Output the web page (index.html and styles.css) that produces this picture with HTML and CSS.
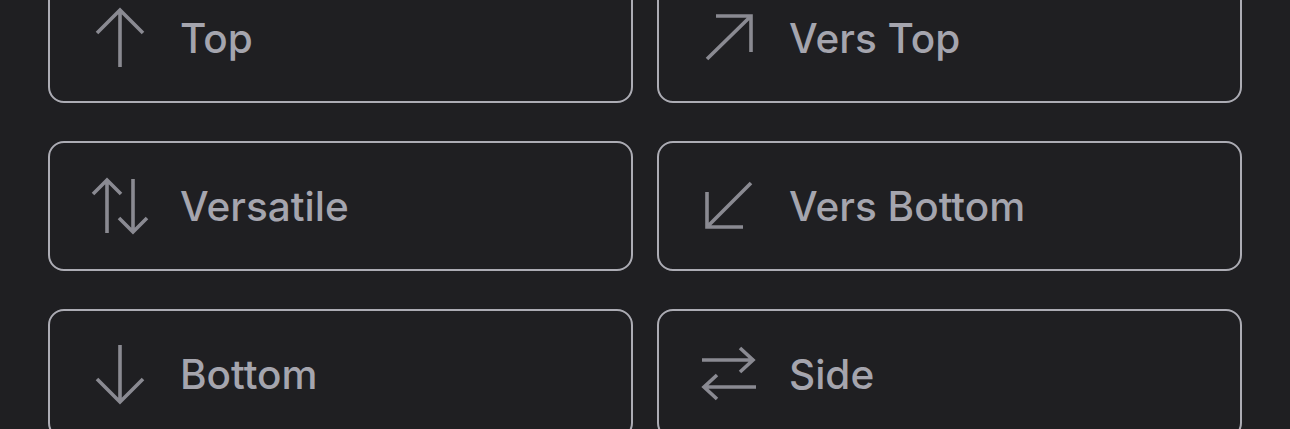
FILE: index.html
```html
<!DOCTYPE html>
<html lang="en">
<head>
<meta charset="utf-8">
<title>Directions</title>
<link rel="stylesheet" href="styles.css">
</head>
<body>
<div class="grid">
  <button class="opt">
    <svg class="ico" viewBox="0 0 64 64"><path d="M32 4V61M9 27L32 4L55 27"/></svg>
    <span class="label">Top</span>
  </button>
  <button class="opt">
    <svg class="ico" viewBox="0 0 64 64"><path d="M10 53L54 10M19 10H54V46"/></svg>
    <span class="label">Vers Top</span>
  </button>
  <button class="opt">
    <svg class="ico" viewBox="0 0 64 64"><path d="M19 6V59M5 20L19 6L33 20M45 5V58M31 44L45 58L59 44"/></svg>
    <span class="label">Versatile</span>
  </button>
  <button class="opt">
    <svg class="ico" viewBox="0 0 64 64"><path d="M54 9L10 53M10 18V53H46"/></svg>
    <span class="label">Vers Bottom</span>
  </button>
  <button class="opt">
    <svg class="ico" viewBox="0 0 64 64"><path d="M32 3V60M9 37L32 60L55 37"/></svg>
    <span class="label">Bottom</span>
  </button>
  <button class="opt">
    <svg class="ico" viewBox="0 0 64 64"><path d="M5 18H57M43 6L56 18L43 30M7 45H59M20 33L7 45L20 57"/></svg>
    <span class="label">Side</span>
  </button>
</div>
</body>
</html>
```
FILE: styles.css
```css
html, body {
  margin: 0;
  padding: 0;
  background: #1f1f22;
  height: 100%;
  overflow: hidden;
}

.grid {
  display: grid;
  grid-template-columns: 585px 585px;
  column-gap: 24px;
  row-gap: 38px;
  padding: 0 48px;
  margin-top: -27px;
}

.opt {
  display: flex;
  align-items: center;
  gap: 28px;
  height: 130px;
  margin: 0;
  padding: 0 0 0 38px;
  background: transparent;
  border: 2px solid #acacb4;
  border-radius: 16px;
  box-sizing: border-box;
  font-family: Inter, "Noto Sans", sans-serif;
  font-weight: 500;
  font-size: 40.5px;
  color: #a5a5ae;
  text-align: left;
  cursor: pointer;
}

.ico {
  width: 64px;
  height: 64px;
  flex: none;
}

.ico path {
  fill: none;
  stroke: #8a8a92;
  stroke-width: 3.6;
  stroke-linecap: butt;
  stroke-linejoin: miter;
}

.label {
  line-height: 1;
  padding-top: 3px;
}
```
